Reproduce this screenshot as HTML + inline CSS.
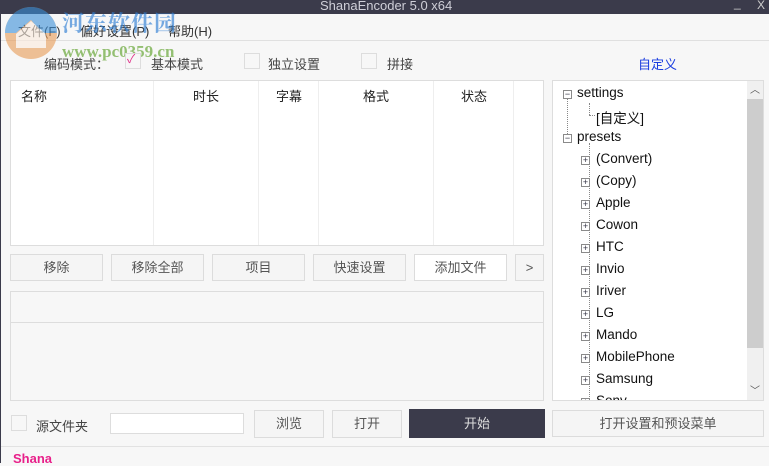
<!DOCTYPE html>
<html><head><meta charset="utf-8"><style>
*{margin:0;padding:0;box-sizing:border-box}
body{width:769px;height:463px;overflow:hidden;background:#f7f7f7;font-family:"Liberation Sans","Noto Sans CJK SC",sans-serif;font-size:13px;color:#222;position:relative}
.a{position:absolute}
.tb{left:0;top:0;width:769px;height:14px;background:#3b3b4b}
.btn{position:absolute;border:1px solid #dcdcdc;background:#f5f5f5;color:#555;text-align:center;font-size:13px}
.cb{position:absolute;width:16px;height:16px;border:1px solid #ddd;background:#f7f7f7}
.lbl{position:absolute;color:#444;font-size:13px}
.tree div{position:absolute;left:0;font-size:13.5px;color:#111;white-space:nowrap}
.pm{display:inline-block;width:9px;height:9px;border:1px solid #8a8a8a;position:absolute;font-size:9px;line-height:7px;text-align:center;color:#334;background:#fff}
</style></head><body>
<div class="a tb"></div>
<div class="a" style="left:320px;top:-2px;color:#cfcfd8;font-size:13px">ShanaEncoder 5.0 x64</div>
<div class="a" style="left:734px;top:-4px;color:#ccc;font-size:12px">_</div>
<div class="a" style="left:757px;top:-2px;color:#ccc;font-size:12px">X</div>
<div class="a" style="left:0;top:14px;width:1px;height:449px;background:#3b3b4b"></div>
<div class="a" style="left:1px;top:40px;width:768px;height:1px;background:#e0e0e0"></div>
<div class="lbl" style="left:18px;top:21px;color:#333">文件(F)</div>
<div class="lbl" style="left:80px;top:21px;color:#333">偏好设置(P)</div>
<div class="lbl" style="left:168px;top:21px;color:#333">帮助(H)</div>
<svg class="a" style="left:2px;top:4px;opacity:.6" width="60" height="58"><circle cx="29" cy="29" r="26" fill="#e89a55"/><path d="M3 29 A26 26 0 0 1 55 29 L40 29 L29 16 L14 29Z" fill="#3a8fd8"/><path d="M14 30 L29 17 L44 30 L44 44 L14 44Z" fill="#fff" opacity=".8"/></svg>
<div class="a" style="left:62px;top:7px;color:#2f7fd4;font-size:22px;font-weight:bold;opacity:.65;letter-spacing:1px;font-family:'Noto Serif CJK SC',serif">河东软件园</div>
<div class="a" style="left:62px;top:42px;color:#6aa83a;font-size:17px;font-weight:bold;opacity:.7;font-family:'Liberation Serif',serif">www.pc0359.cn</div>
<div class="lbl" style="left:44px;top:54px">编码模式：</div>
<div class="cb" style="left:125px;top:53px"></div><div class="a" style="left:127px;top:50px;color:#e0338a;font-size:12px">✓</div>
<div class="lbl" style="left:151px;top:54px">基本模式</div>
<div class="cb" style="left:244px;top:53px"></div><div class="lbl" style="left:268px;top:54px">独立设置</div>
<div class="cb" style="left:361px;top:53px"></div><div class="lbl" style="left:387px;top:54px">拼接</div>
<div class="a" style="left:638px;top:54px;color:#1a3de0">自定义</div>
<div class="a" style="left:10px;top:80px;width:534px;height:166px;background:#fff;border:1px solid #ddd"></div>
<div class="a" style="left:153px;top:81px;width:1px;height:164px;background:#eee"></div>
<div class="a" style="left:258px;top:81px;width:1px;height:164px;background:#eee"></div>
<div class="a" style="left:318px;top:81px;width:1px;height:164px;background:#eee"></div>
<div class="a" style="left:433px;top:81px;width:1px;height:164px;background:#eee"></div>
<div class="a" style="left:513px;top:81px;width:1px;height:164px;background:#eee"></div>
<div class="lbl" style="left:21px;top:86px;color:#222">名称</div>
<div class="lbl" style="left:193px;top:86px;color:#222">时长</div>
<div class="lbl" style="left:276px;top:86px;color:#222">字幕</div>
<div class="lbl" style="left:363px;top:86px;color:#222">格式</div>
<div class="lbl" style="left:461px;top:86px;color:#222">状态</div>
<div class="btn" style="left:10px;top:254px;width:93px;height:27px;line-height:25px">移除</div>
<div class="btn" style="left:111px;top:254px;width:93px;height:27px;line-height:25px">移除全部</div>
<div class="btn" style="left:212px;top:254px;width:93px;height:27px;line-height:25px">项目</div>
<div class="btn" style="left:313px;top:254px;width:93px;height:27px;line-height:25px">快速设置</div>
<div class="btn" style="left:414px;top:254px;width:93px;height:27px;line-height:25px;background:#fff">添加文件</div>
<div class="btn" style="left:515px;top:254px;width:29px;height:27px;line-height:25px">&gt;</div>
<div class="a" style="left:10px;top:291px;width:534px;height:110px;border:1px solid #ddd;background:#f7f7f7"></div>
<div class="a" style="left:11px;top:322px;width:532px;height:1px;background:#ddd"></div>
<div class="cb" style="left:11px;top:415px"></div>
<div class="lbl" style="left:36px;top:416px">源文件夹</div>
<div class="a" style="left:110px;top:413px;width:134px;height:21px;border:1px solid #ddd;background:#fff"></div>
<div class="btn" style="left:254px;top:410px;width:70px;height:28px;line-height:26px">浏览</div>
<div class="btn" style="left:332px;top:410px;width:70px;height:28px;line-height:26px">打开</div>
<div class="a" style="left:409px;top:409px;width:136px;height:29px;background:#3b3b4b;color:#ddd;text-align:center;line-height:29px">开始</div>
<div class="btn" style="left:552px;top:410px;width:212px;height:27px;line-height:25px">打开设置和预设菜单</div>
<div class="a" style="left:1px;top:446px;width:768px;height:1px;background:#e2e2e2"></div>
<div class="a" style="left:13px;top:451px;color:#e8208a;font-weight:bold;font-size:13px">Shana</div>
<div class="a" style="left:552px;top:80px;width:212px;height:321px;background:#fff;border:1px solid #ddd;overflow:hidden">
<div class="a" style="left:194px;top:0;width:16px;height:319px;background:#f0f0f0"></div>
<div class="a" style="left:194px;top:18px;width:16px;height:249px;background:#cdcdcd"></div>
<div class="a" style="left:197px;top:0px;font-size:10px;color:#555">︿</div>
<div class="a" style="left:197px;top:301px;font-size:10px;color:#555">﹀</div>
<div class="a" style="left:14px;top:17px;width:0;height:40px;border-left:1px dotted #888"></div>
<div class="a" style="left:36px;top:22px;width:0;height:12px;border-left:1px dotted #888"></div>
<div class="a" style="left:36px;top:34px;width:6px;border-top:1px dotted #888"></div>
<div class="a" style="left:36px;top:62px;width:0;height:260px;border-left:1px dotted #888"></div>
<div class="tree">
<span class="pm" style="left:10px;top:9px">−</span><div style="left:24px;top:4px">settings</div>
<div style="left:43px;top:26px">[自定义]</div>
<span class="pm" style="left:10px;top:53px">−</span><div style="left:24px;top:48px">presets</div>
<span class="pm" style="left:28px;top:75px">+</span><div style="left:43px;top:70px">(Convert)</div>
<span class="pm" style="left:28px;top:97px">+</span><div style="left:43px;top:92px">(Copy)</div>
<span class="pm" style="left:28px;top:119px">+</span><div style="left:43px;top:114px">Apple</div>
<span class="pm" style="left:28px;top:141px">+</span><div style="left:43px;top:136px">Cowon</div>
<span class="pm" style="left:28px;top:163px">+</span><div style="left:43px;top:158px">HTC</div>
<span class="pm" style="left:28px;top:185px">+</span><div style="left:43px;top:180px">Invio</div>
<span class="pm" style="left:28px;top:207px">+</span><div style="left:43px;top:202px">Iriver</div>
<span class="pm" style="left:28px;top:229px">+</span><div style="left:43px;top:224px">LG</div>
<span class="pm" style="left:28px;top:251px">+</span><div style="left:43px;top:246px">Mando</div>
<span class="pm" style="left:28px;top:273px">+</span><div style="left:43px;top:268px">MobilePhone</div>
<span class="pm" style="left:28px;top:295px">+</span><div style="left:43px;top:290px">Samsung</div>
<span class="pm" style="left:28px;top:317px">+</span><div style="left:43px;top:312px">Sony</div>
</div></div>
</body></html>
